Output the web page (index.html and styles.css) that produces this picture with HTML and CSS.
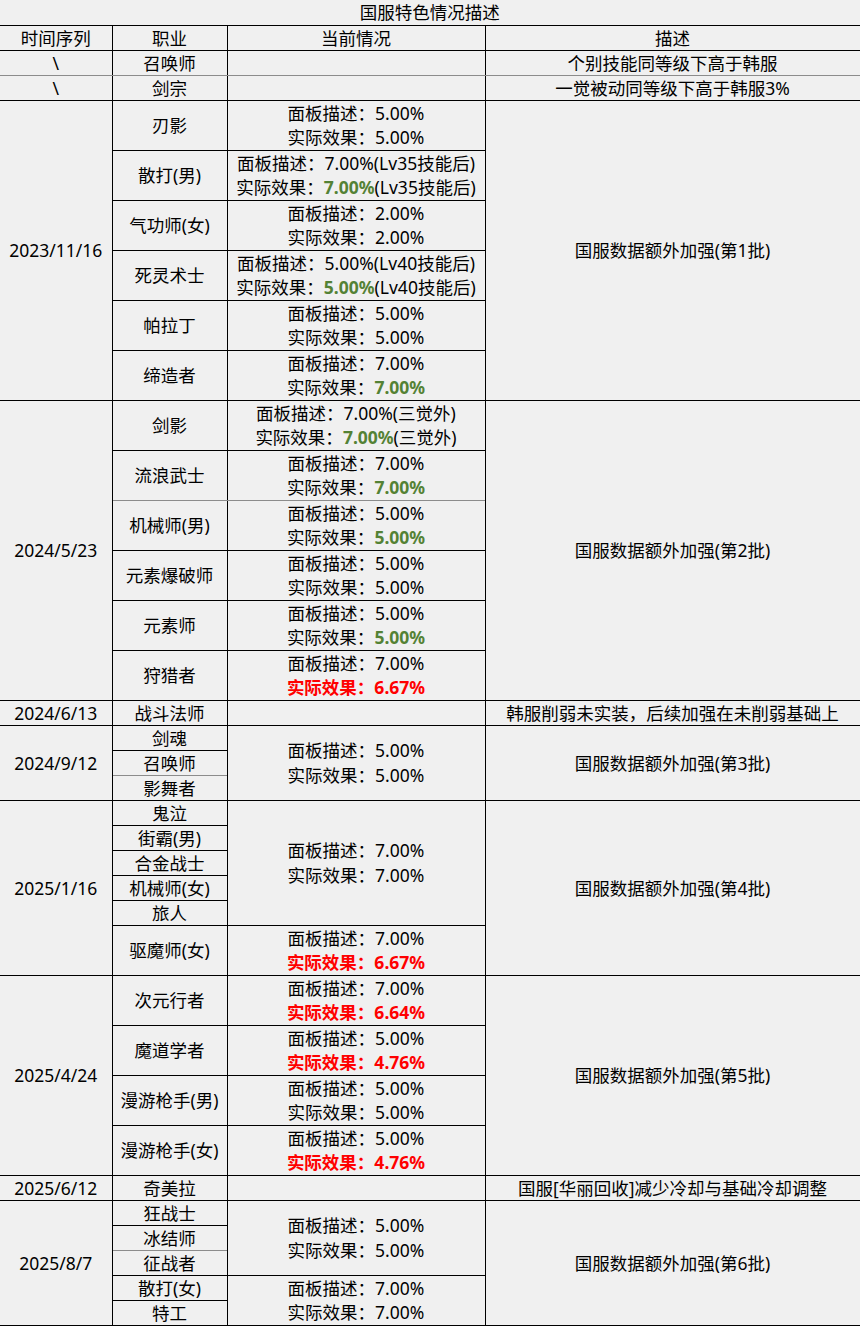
FILE: index.html
```html
<!DOCTYPE html>
<html lang="zh-CN">
<head>
<meta charset="utf-8">
<title>国服特色情况描述</title>
<link rel="stylesheet" href="styles.css">
</head>
<body>
<table class="sheet">
<colgroup>
<col class="w1"><col class="w2"><col class="w3"><col class="w4">
</colgroup>
<tbody>
<tr><td class="c1 title" colspan="4">国服特色情况描述</td></tr>
<tr><td class="c1">时间序列</td><td>职业</td><td>当前情况</td><td>描述</td></tr>
<tr class="gray"><td class="c1">\</td><td>召唤师</td><td></td><td>个别技能同等级下高于韩服</td></tr>
<tr><td class="c1">\</td><td>剑宗</td><td></td><td>一觉被动同等级下高于韩服3%</td></tr>

<tr><td class="c1" rowspan="12">2023/11/16</td><td rowspan="2">刃影</td><td rowspan="2"><div class="ln">面板描述：5.00%</div><div class="ln">实际效果：5.00%</div></td><td rowspan="12">国服数据额外加强(第1批)</td></tr>
<tr></tr>
<tr><td rowspan="2">散打(男)</td><td rowspan="2"><div class="ln">面板描述：7.00%(Lv35技能后)</div><div class="ln">实际效果：<b class="g">7.00%</b>(Lv35技能后)</div></td></tr>
<tr></tr>
<tr><td rowspan="2">气功师(女)</td><td rowspan="2"><div class="ln">面板描述：2.00%</div><div class="ln">实际效果：2.00%</div></td></tr>
<tr></tr>
<tr><td rowspan="2">死灵术士</td><td rowspan="2"><div class="ln">面板描述：5.00%(Lv40技能后)</div><div class="ln">实际效果：<b class="g">5.00%</b>(Lv40技能后)</div></td></tr>
<tr></tr>
<tr><td rowspan="2">帕拉丁</td><td rowspan="2"><div class="ln">面板描述：5.00%</div><div class="ln">实际效果：5.00%</div></td></tr>
<tr></tr>
<tr><td rowspan="2">缔造者</td><td rowspan="2"><div class="ln">面板描述：7.00%</div><div class="ln">实际效果：<b class="g">7.00%</b></div></td></tr>
<tr></tr>

<tr><td class="c1" rowspan="12">2024/5/23</td><td rowspan="2">剑影</td><td rowspan="2"><div class="ln">面板描述：7.00%(三觉外)</div><div class="ln">实际效果：<b class="g">7.00%</b>(三觉外)</div></td><td rowspan="12">国服数据额外加强(第2批)</td></tr>
<tr></tr>
<tr><td rowspan="2" class="gb">流浪武士</td><td rowspan="2" class="gb"><div class="ln">面板描述：7.00%</div><div class="ln">实际效果：<b class="g">7.00%</b></div></td></tr>
<tr></tr>
<tr><td rowspan="2">机械师(男)</td><td rowspan="2"><div class="ln">面板描述：5.00%</div><div class="ln">实际效果：<b class="g">5.00%</b></div></td></tr>
<tr></tr>
<tr><td rowspan="2">元素爆破师</td><td rowspan="2"><div class="ln">面板描述：5.00%</div><div class="ln">实际效果：5.00%</div></td></tr>
<tr></tr>
<tr><td rowspan="2">元素师</td><td rowspan="2"><div class="ln">面板描述：5.00%</div><div class="ln">实际效果：<b class="g">5.00%</b></div></td></tr>
<tr></tr>
<tr><td rowspan="2">狩猎者</td><td rowspan="2"><div class="ln">面板描述：7.00%</div><div class="ln"><b class="r">实际效果：6.67%</b></div></td></tr>
<tr></tr>

<tr><td class="c1">2024/6/13</td><td>战斗法师</td><td></td><td>韩服削弱未实装，后续加强在未削弱基础上</td></tr>

<tr><td class="c1" rowspan="3">2024/9/12</td><td>剑魂</td><td rowspan="3"><div class="ln">面板描述：5.00%</div><div class="ln">实际效果：5.00%</div></td><td rowspan="3">国服数据额外加强(第3批)</td></tr>
<tr><td class="gb">召唤师</td></tr>
<tr><td>影舞者</td></tr>

<tr><td class="c1" rowspan="7">2025/1/16</td><td>鬼泣</td><td rowspan="5"><div class="ln">面板描述：7.00%</div><div class="ln">实际效果：7.00%</div></td><td rowspan="7">国服数据额外加强(第4批)</td></tr>
<tr><td>街霸(男)</td></tr>
<tr><td>合金战士</td></tr>
<tr><td>机械师(女)</td></tr>
<tr><td>旅人</td></tr>
<tr><td rowspan="2">驱魔师(女)</td><td rowspan="2"><div class="ln">面板描述：7.00%</div><div class="ln"><b class="r">实际效果：6.67%</b></div></td></tr>
<tr></tr>

<tr><td class="c1" rowspan="8">2025/4/24</td><td rowspan="2">次元行者</td><td rowspan="2"><div class="ln">面板描述：7.00%</div><div class="ln"><b class="r">实际效果：6.64%</b></div></td><td rowspan="8">国服数据额外加强(第5批)</td></tr>
<tr></tr>
<tr><td rowspan="2">魔道学者</td><td rowspan="2"><div class="ln">面板描述：5.00%</div><div class="ln"><b class="r">实际效果：4.76%</b></div></td></tr>
<tr></tr>
<tr><td rowspan="2">漫游枪手(男)</td><td rowspan="2"><div class="ln">面板描述：5.00%</div><div class="ln">实际效果：5.00%</div></td></tr>
<tr></tr>
<tr><td rowspan="2">漫游枪手(女)</td><td rowspan="2"><div class="ln">面板描述：5.00%</div><div class="ln"><b class="r">实际效果：4.76%</b></div></td></tr>
<tr></tr>

<tr><td class="c1">2025/6/12</td><td>奇美拉</td><td></td><td>国服[华丽回收]减少冷却与基础冷却调整</td></tr>

<tr><td class="c1" rowspan="5">2025/8/7</td><td>狂战士</td><td rowspan="3"><div class="ln">面板描述：5.00%</div><div class="ln">实际效果：5.00%</div></td><td rowspan="5">国服数据额外加强(第6批)</td></tr>
<tr><td class="gb">冰结师</td></tr>
<tr><td>征战者</td></tr>
<tr><td>散打(女)</td><td rowspan="2"><div class="ln">面板描述：7.00%</div><div class="ln">实际效果：7.00%</div></td></tr>
<tr><td>特工</td></tr>
</tbody>
</table>
</body>
</html>
```

FILE: styles.css
```css
html, body {
  margin: 0;
  padding: 0;
  background: #f0f0f0;
}

body {
  width: 860px;
  height: 1326px;
  overflow: hidden;
  font-family: "Noto Sans", "Noto Sans CJK SC", sans-serif;
  font-size: 17.5px;
  color: #000;
}

.sheet {
  width: 860px;
  border-collapse: collapse;
  table-layout: fixed;
  border: none;
}

.w1 { width: 112px; }
.w2 { width: 115px; }
.w3 { width: 258px; }
.w4 { width: 375px; }

.sheet tr {
  height: 25px;
}

.sheet td {
  border: 1px solid #000;
  padding: 0;
  height: 24px;
  line-height: 24px;
  text-align: center;
  vertical-align: middle;
  white-space: nowrap;
  overflow: hidden;
}

.sheet td.c1 {
  border-left: none;
}

.sheet td.title {
  border-top: none;
}

.sheet tr.gray td,
.sheet td.gb {
  border-bottom-color: #8c8c8c;
}

.ln {
  line-height: 24.5px;
}

.g {
  color: #548235;
  font-weight: 700;
}

.r {
  color: #ff0000;
  font-weight: 700;
}
```
